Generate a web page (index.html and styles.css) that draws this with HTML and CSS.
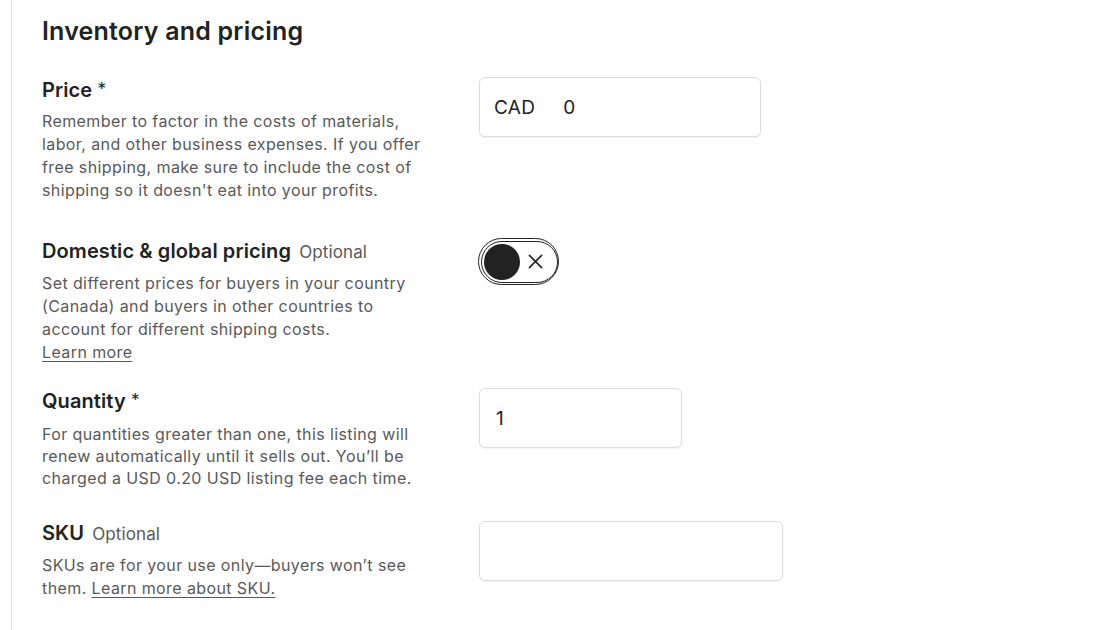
FILE: index.html
```html
<!DOCTYPE html>
<html lang="en">
<head>
<meta charset="utf-8">
<title>Inventory and pricing</title>
<link rel="stylesheet" href="styles.css">
</head>
<body>
<main class="panel">
  <h1 class="title">Inventory and pricing</h1>

  <section class="row row-price">
    <div class="info">
      <h2 class="label">Price <span class="req">*</span></h2>
      <p class="desc">Remember to factor in the costs of materials, labor, and other business expenses. If you offer free shipping, make sure to include the cost of shipping so it doesn't eat into your profits.</p>
    </div>
    <div class="control">
      <div class="input input-price">
        <span class="prefix">CAD</span>
        <span class="value">0</span>
      </div>
    </div>
  </section>

  <section class="row row-global">
    <div class="info">
      <h2 class="label">Domestic &amp; global pricing <span class="opt">Optional</span></h2>
      <p class="desc">Set different prices for buyers in your country (Canada) and buyers in other countries to account for different shipping costs.<br><a class="link" href="#">Learn more</a></p>
    </div>
    <div class="control">
      <div class="toggle">
        <div class="toggle-track">
          <span class="knob"></span>
          <svg class="toggle-x" width="16" height="16" viewBox="0 0 16 16" aria-hidden="true">
            <path d="M1.5 1.5 L14.5 14.5 M14.5 1.5 L1.5 14.5" stroke="#222" stroke-width="1.7" fill="none" stroke-linecap="round"/>
          </svg>
        </div>
      </div>
    </div>
  </section>

  <section class="row row-qty">
    <div class="info">
      <h2 class="label">Quantity <span class="req">*</span></h2>
      <p class="desc desc-tight">For quantities greater than one, this listing will renew automatically until it sells out. You’ll be charged a USD 0.20 USD listing fee each time.</p>
    </div>
    <div class="control">
      <div class="input input-qty"><span class="value-start">1</span></div>
    </div>
  </section>

  <section class="row row-sku">
    <div class="info">
      <h2 class="label">SKU <span class="opt">Optional</span></h2>
      <p class="desc">SKUs are for your use only—buyers won’t see them. <a class="link" href="#">Learn more about SKU.</a></p>
    </div>
    <div class="control">
      <div class="input input-sku"></div>
    </div>
  </section>
</main>
</body>
</html>
```

FILE: styles.css
```css
html, body {
  margin: 0;
  padding: 0;
  background: #ffffff;
}

body {
  font-family: Inter, "Noto Sans", "Liberation Sans", sans-serif;
  color: #222222;
  height: 630px;
  overflow: hidden;
}

.panel {
  margin-left: 11px;
  border-left: 1px solid #e3e3e3;
  min-height: 630px;
  padding: 15px 0 0 30px;
  box-sizing: border-box;
}

.title {
  margin: 0 0 30px 0;
  font-size: 25px;
  line-height: 32px;
  font-weight: 600;
  letter-spacing: 0.2px;
}

.row {
  display: flex;
  align-items: flex-start;
}

.row-price { padding-bottom: 37px; }
.row-global { padding-bottom: 24px; }
.row-qty { padding-bottom: 32px; }

.info {
  width: 386px;
  margin-right: 51px;
}

.label {
  margin: 0;
  font-size: 20px;
  line-height: 24px;
  font-weight: 600;
  letter-spacing: 0.1px;
}

.req {
  font-weight: 400;
  font-size: 17px;
  vertical-align: 2px;
}

.opt {
  font-weight: 400;
  font-size: 17px;
  color: #595959;
  margin-left: 3px;
}

.desc {
  margin: 8px 0 0 0;
  font-size: 16px;
  line-height: 23px;
  letter-spacing: 0.4px;
  color: #595959;
}

.desc-tight {
  margin-top: 10px;
  line-height: 22px;
}

.link {
  color: #595959;
  text-decoration: underline;
  text-underline-offset: 3px;
}

.input {
  height: 60px;
  box-sizing: border-box;
  border: 1px solid #dcdcdc;
  border-radius: 6px;
  box-shadow: 0 1px 2px rgba(0, 0, 0, 0.06);
  display: flex;
  align-items: center;
  padding: 0 14px;
  font-size: 19px;
  letter-spacing: 0.3px;
  color: #222;
  background: #fff;
}

.input-price { width: 282px; }
.input-qty { width: 203px; padding-left: 16px; }
.input-sku { width: 304px; }

.prefix { margin-right: 28px; }

.toggle {
  width: 81px;
  height: 47px;
  box-sizing: border-box;
  border: 1.5px solid #222;
  border-radius: 24px;
  padding: 1.5px 0 1.5px 1.5px;
  margin-top: -1px;
  margin-left: -1px;
}

.toggle-track {
  height: 100%;
  box-sizing: border-box;
  border: 1.5px solid #222;
  border-radius: 21px;
  display: flex;
  align-items: center;
  padding-left: 2px;
}

.knob {
  width: 36px;
  height: 36px;
  border-radius: 50%;
  background: #222;
  flex: none;
}

.toggle-x {
  width: 15px;
  height: 15px;
  margin-left: 8px;
}
```
